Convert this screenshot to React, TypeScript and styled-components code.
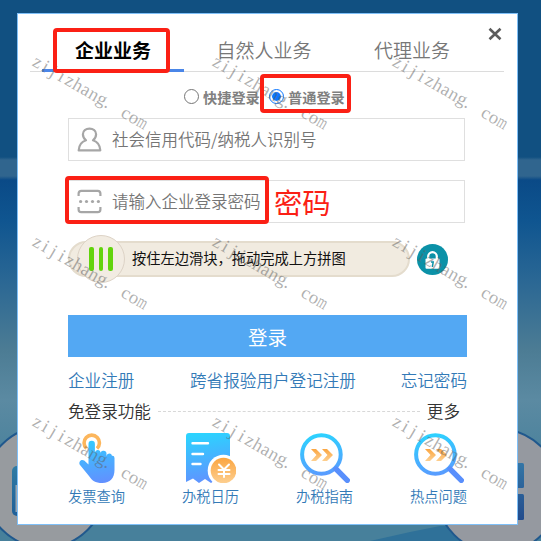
import styled, { createGlobalStyle, css } from "styled-components";

const GlobalStyle = createGlobalStyle`
  * {
    box-sizing: border-box;
  }
  body {
    margin: 0;
    background: #fff;
    overflow: hidden;
  }
`;

const Page = styled.div`
  position: relative;
  width: 541px;
  height: 541px;
  padding: 13px 23px 16px 17px;
  overflow: hidden;
  font-family: "Noto Sans CJK SC", "Noto Sans", sans-serif;
  font-weight: 350;
  background: linear-gradient(
    180deg,
    #115081 0,
    #115081 157px,
    #30658e 160px,
    #30658e 176px,
    #0a4a87 180px,
    #0f5590 220px,
    #2a6794 280px,
    #4c7c94 350px,
    #5b8aa2 400px,
    #47809b 470px,
    #47809b 541px
  );
`;

const Scenery = styled.svg`
  position: absolute;
  left: 0;
  top: 0;
`;

const Dialog = styled.div`
  position: relative;
  width: 501px;
  height: 512px;
  border: 1px solid #7fc0f8;
  background: #fff;
  padding: 14px 12px 0;
`;

const CloseButton = styled.button`
  position: absolute;
  right: 15px;
  top: 13px;
  width: 14px;
  height: 14px;
  padding: 0;
  border: none;
  background: none;
  cursor: pointer;
  svg {
    display: block;
  }
`;

const Tabs = styled.div`
  display: flex;
  height: 44px;
  width: 474px;
  padding-left: 12px;
  border-bottom: 1px solid #dcdcdc;
`;

const Tab = styled.div<{ $active?: boolean; $width: number }>`
  width: ${p => p.$width}px;
  height: 44px;
  line-height: 43px;
  text-align: center;
  white-space: nowrap;
  font-size: 19px;
  color: #777;
  ${p =>
    p.$active &&
    css`
      color: #000;
      font-weight: 700;
      border-bottom: 3px solid #4a86e8;
    `}
`;

const Modes = styled.div`
  display: flex;
  align-items: center;
  height: 46px;
  padding: 4px 0 0 154px;
`;

const Mode = styled.label`
  display: flex;
  align-items: center;
  gap: 4px;
  width: 85px;
  font-size: 14.2px;
  font-weight: 700;
  line-height: 20px;
  color: #808080;
  white-space: nowrap;
`;

const Radio = styled.span<{ $checked?: boolean }>`
  flex: none;
  width: 15px;
  height: 15px;
  margin-top: -1px;
  border-radius: 50%;
  border: 1.5px solid ${p => (p.$checked ? "#0a76ff" : "#767676")};
  background: ${p => (p.$checked ? "#0a76ff" : "#fff")};
  background-clip: content-box;
  padding: 1.8px;
`;

const Form = styled.div`
  width: 399px;
  margin-left: 38px;
`;

const Field = styled.div`
  display: flex;
  align-items: center;
  gap: 10px;
  width: 397px;
  height: 43px;
  margin-bottom: 19px;
  padding: 0 0 1px 8px;
  border: 1px solid #dfdfdf;
  font-size: 16.5px;
  line-height: 24px;
  color: #757575;
  white-space: nowrap;
  svg {
    flex: none;
  }
`;

const CaptchaRow = styled.div`
  display: flex;
  align-items: center;
  gap: 7px;
  height: 36px;
  margin-top: -1px;
`;

const Slider = styled.div`
  display: flex;
  align-items: center;
  width: 342px;
  height: 36px;
  padding-left: 7px;
  border: 2px solid #e4dccd;
  border-radius: 18px;
  background: #f1ebe0;
`;

const Knob = styled.div`
  display: flex;
  align-items: center;
  justify-content: center;
  gap: 5px;
  flex: none;
  width: 48px;
  height: 48px;
  border: 1.5px solid #ddd3c6;
  border-radius: 50%;
  background: #f2ece2;
`;

const Grip = styled.i`
  width: 4.7px;
  height: 24px;
  border-radius: 2px;
  background: #62d40c;
`;

const SliderText = styled.span`
  margin: -2px 0 0 7px;
  font-size: 14.25px;
  font-weight: 400;
  line-height: 20px;
  color: #111;
  white-space: nowrap;
`;

const LoginButton = styled.button`
  display: block;
  width: 399px;
  height: 42px;
  margin-top: 38px;
  padding: 0;
  border: none;
  background: #53a8f3;
  color: #fff;
  font-family: inherit;
  font-weight: 400;
  font-size: 19.5px;
  line-height: 41px;
  cursor: pointer;
`;

const Links = styled.div`
  display: flex;
  justify-content: space-between;
  margin-top: 11px;
  font-size: 16.6px;
  line-height: 24px;
  white-space: nowrap;
`;

const Link = styled.a<{ $indent?: number }>`
  margin-left: ${p => p.$indent ?? 0}px;
  color: #337ab7;
`;

const SectionHead = styled.div`
  display: flex;
  align-items: center;
  gap: 7px;
  height: 24px;
  margin-top: 7px;
  padding-right: 7px;
  font-size: 16.6px;
  line-height: 24px;
  color: #333;
  white-space: nowrap;
`;

const Dashes = styled.div`
  flex: 1;
  border-top: 1px dashed #d8d8d8;
`;

const Services = styled.div`
  display: flex;
  justify-content: space-between;
  margin-top: 10px;
`;

const Service = styled.a`
  display: flex;
  flex-direction: column;
  align-items: center;
  width: 57px;
  font-size: 14.25px;
  line-height: 20px;
  color: #337ab7;
  white-space: nowrap;
  svg {
    display: block;
    margin-bottom: 3px;
  }
`;

/* red marker boxes laid over the dialog */
const Marker = styled.div<{ $x: number; $y: number; $w: number; $h: number }>`
  position: absolute;
  left: ${p => p.$x}px;
  top: ${p => p.$y}px;
  width: ${p => p.$w}px;
  height: ${p => p.$h}px;
  border: 4px solid #fb2015;
  border-radius: 4px;
`;

const MarkerText = styled.div`
  position: absolute;
  left: 274px;
  top: 182px;
  font-size: 28.3px;
  font-weight: 400;
  line-height: 40px;
  color: #fb2015;
  white-space: nowrap;
`;

const Watermarks = styled.div`
  position: absolute;
  left: 0;
  top: 2px;
  display: grid;
  grid-template-columns: repeat(3, 180px);
  grid-auto-rows: 180px;
  place-items: center;
  pointer-events: none;
`;

const Watermark = styled.div`
  display: flex;
  transform: rotate(30deg);
  font-family: "Liberation Serif", serif;
  font-weight: 400;
  font-size: 18.5px;
  line-height: 20px;
  color: rgba(95, 95, 95, 0.5);
  white-space: pre;
`;

const Glyph = styled.span<{ $narrow?: boolean; $start?: boolean }>`
  display: flex;
  justify-content: ${p => (p.$start ? "flex-start" : "center")};
  width: 9.3px;
  ${p => p.$narrow && "transform: scaleX(0.66);"}
`;

const UserIcon = () => (
  <svg width="25" height="25" viewBox="0 0 25 25" fill="none" stroke="#a6a6a6" strokeWidth="2.2" strokeLinejoin="round">
    <path d="M9 13.3C6.8 11.5 5.9 9 5.9 7.2C6 3.8 8.8 1.6 12.5 1.6S19 3.8 19.1 7.2C19.1 9 18.2 11.5 16 13.3C20.5 14.8 23 17.5 23.3 23.4H1.7C2 17.5 4.5 14.8 9 13.3Z" />
  </svg>
);

const PasswordIcon = () => (
  <svg width="25" height="25" viewBox="0 0 25 25" fill="none" stroke="#a6a6a6" strokeWidth="2.2">
    <path d="M1.6 7V4.5Q1.6 1.8 4.3 1.8H20.7Q23.4 1.8 23.4 4.5V7M1.6 18V20.5Q1.6 23.2 4.3 23.2H20.7Q23.4 23.2 23.4 20.5V18" />
    <g fill="#a6a6a6" stroke="none">
      <circle cx="3.6" cy="12.5" r="1.6" />
      <circle cx="9.5" cy="12.5" r="1.6" />
      <circle cx="15.5" cy="12.5" r="1.6" />
      <circle cx="21.4" cy="12.5" r="1.6" />
    </g>
  </svg>
);

const LockIcon = () => (
  <svg width="31" height="31" viewBox="0 0 31 31">
    <circle cx="15.5" cy="15.5" r="15.5" fill="#0b91a7" />
    <path d="M11.2 15V12.5a4.3 4.3 0 0 1 8.6 0V15" fill="none" stroke="#fff" strokeWidth="2.2" />
    <rect x="8.5" y="14.5" width="14" height="10.3" rx="1" fill="#fff" />
    <path d="M14 18h2.2l-.8 5" fill="none" stroke="#0b91a7" strokeWidth="1.5" />
  </svg>
);

const TouchIcon = () => (
  <svg width="50" height="50" viewBox="0 0 50 50">
    <path d="M14.5 15.5A7.7 7.7 0 1 1 25 15.5" fill="none" stroke="#fcb65c" strokeWidth="3.6" />
    <circle cx="20" cy="10.5" r="5" fill="#fff" />
    <path
      fill="url(#blue)"
      d="M16.5 11a3.2 3.2 0 0 1 6.4 0V19.5a2.9 2.9 0 0 1 5.6-.5V21a2.9 2.9 0 0 1 6-.5V23a2.8 2.8 0 0 1 5.5-.2Q42.5 22.5 42.5 25V37C42.5 45 38 50 30.5 50C23 50 20 47.5 17 43L8 32C6 29 9 25.5 12.2 27.5L16.5 31.5Z"
    />
  </svg>
);

const CalendarIcon = () => (
  <svg width="50" height="50" viewBox="0 0 50 50">
    <path fill="url(#blue)" d="M3 0H41Q44 0 44 3V49L40 46L36 50L31 45.5L25 50L19 46L13 50L7 45.5L0 49V3Q0 0 3 0Z" />
    <path d="M6.5 10.3H22M6.5 21H17M6.5 31H14.5" stroke="#fff" strokeWidth="2.4" strokeLinecap="round" />
    <circle cx="37.5" cy="37.5" r="15.8" fill="#fff" />
    <circle cx="37.5" cy="37.5" r="12.8" fill="url(#orange)" />
    <path d="M33 31.5L38 36.5L43 31.5M38 36.5V44M32.5 37H43.5M32.5 41H43.5" fill="none" stroke="#fff" strokeWidth="2" strokeLinecap="round" />
  </svg>
);

const SearchIcon = () => (
  <svg width="50" height="50" viewBox="0 0 50 50">
    <circle cx="21.4" cy="21.5" r="19.3" fill="none" stroke="url(#blue)" strokeWidth="4" />
    <path d="M36 36L47.3 47.3" stroke="#598ffc" strokeWidth="5.4" strokeLinecap="round" />
    <path
      fill="url(#orange)"
      d="M11 16H16L22 22L16 28H11L16.5 22ZM22 16H27L33 22L27 28H22L27.5 22Z"
    />
  </svg>
);

const services = [
  { label: "发票查询", Icon: TouchIcon },
  { label: "办税日历", Icon: CalendarIcon },
  { label: "办税指南", Icon: SearchIcon },
  { label: "热点问题", Icon: SearchIcon },
];

export default function App() {
  return (
    <Page>
      <GlobalStyle />
      <Scenery width="541" height="541" viewBox="0 0 541 541">
        <defs>
          <linearGradient id="blue" gradientUnits="userSpaceOnUse" x1="20" y1="0" x2="28" y2="50">
            <stop offset="0" stopColor="#2cd3ff" />
            <stop offset="1" stopColor="#6290ff" />
          </linearGradient>
          <linearGradient id="orange" x1="0" y1="0" x2="0" y2="1">
            <stop offset="0" stopColor="#fba540" />
            <stop offset="1" stopColor="#fdcf90" />
          </linearGradient>
          <linearGradient id="tile" x1="0" y1="0" x2="0" y2="1">
            <stop offset="0" stopColor="#2f7ba3" />
            <stop offset="1" stopColor="#1f5f98" />
          </linearGradient>
          <linearGradient id="squares" gradientUnits="userSpaceOnUse" x1="0" y1="463" x2="0" y2="520">
            <stop offset="0" stopColor="#3376a6" />
            <stop offset="1" stopColor="#224b8c" />
          </linearGradient>
        </defs>
        <path d="M370 541L410 532L440 526L470 525V541Z" fill="#2f7199" />
        <circle cx="45" cy="487" r="60.5" fill="#979b9f" stroke="#20588d" strokeWidth="2" />
        <circle cx="498" cy="491" r="62" fill="#9599a0" stroke="#20588d" strokeWidth="2" />
        <rect x="12" y="466" width="40" height="50" rx="5" fill="url(#tile)" />
        <rect x="15.5" y="485" width="30" height="27" fill="#9ba5af" />
        <rect x="500" y="463" width="24" height="25" rx="1.5" fill="url(#squares)" />
        <rect x="500" y="494" width="24" height="26" rx="1.5" fill="url(#squares)" />
      </Scenery>

      <Dialog>
        <CloseButton aria-label="close">
          <svg width="14" height="14" viewBox="0 0 14 14" stroke="#5c5c5c" strokeWidth="2.6">
            <path d="M1.5 1.7L12.5 12.3M12.5 1.7L1.5 12.3" />
          </svg>
        </CloseButton>
        <Tabs>
          <Tab $active $width={142}>企业业务</Tab>
          <Tab $width={160}>自然人业务</Tab>
          <Tab $width={136}>代理业务</Tab>
        </Tabs>
        <Modes>
          <Mode><Radio />快捷登录</Mode>
          <Mode><Radio $checked />普通登录</Mode>
        </Modes>
        <Form>
          <Field><UserIcon />社会信用代码/纳税人识别号</Field>
          <Field><PasswordIcon />请输入企业登录密码</Field>
          <CaptchaRow>
            <Slider>
              <Knob><Grip /><Grip /><Grip /></Knob>
              <SliderText>按住左边滑块，拖动完成上方拼图</SliderText>
            </Slider>
            <LockIcon />
          </CaptchaRow>
          <LoginButton>登录</LoginButton>
          <Links>
            <Link>企业注册</Link>
            <Link $indent={11}>跨省报验用户登记注册</Link>
            <Link>忘记密码</Link>
          </Links>
          <SectionHead>
            免登录功能
            <Dashes />
            更多
          </SectionHead>
          <Services>
            {services.map(({ label, Icon }) => (
              <Service key={label}>
                <Icon />
                {label}
              </Service>
            ))}
          </Services>
        </Form>
      </Dialog>

      <Watermarks>
        {Array.from({ length: 9 }, (_, i) => (
          <Watermark key={i}>
            {"zijizhang. com".split("").map((ch, j) => (
              <Glyph key={j} $narrow={ch === "m"} $start={ch === "."}>{ch}</Glyph>
            ))}
          </Watermark>
        ))}
      </Watermarks>

      <Marker $x={53} $y={28} $w={117} $h={45} />
      <Marker $x={260} $y={74} $w={91} $h={39} />
      <Marker $x={65} $y={176} $w={204} $h={48} />
      <MarkerText>密码</MarkerText>
    </Page>
  );
}
